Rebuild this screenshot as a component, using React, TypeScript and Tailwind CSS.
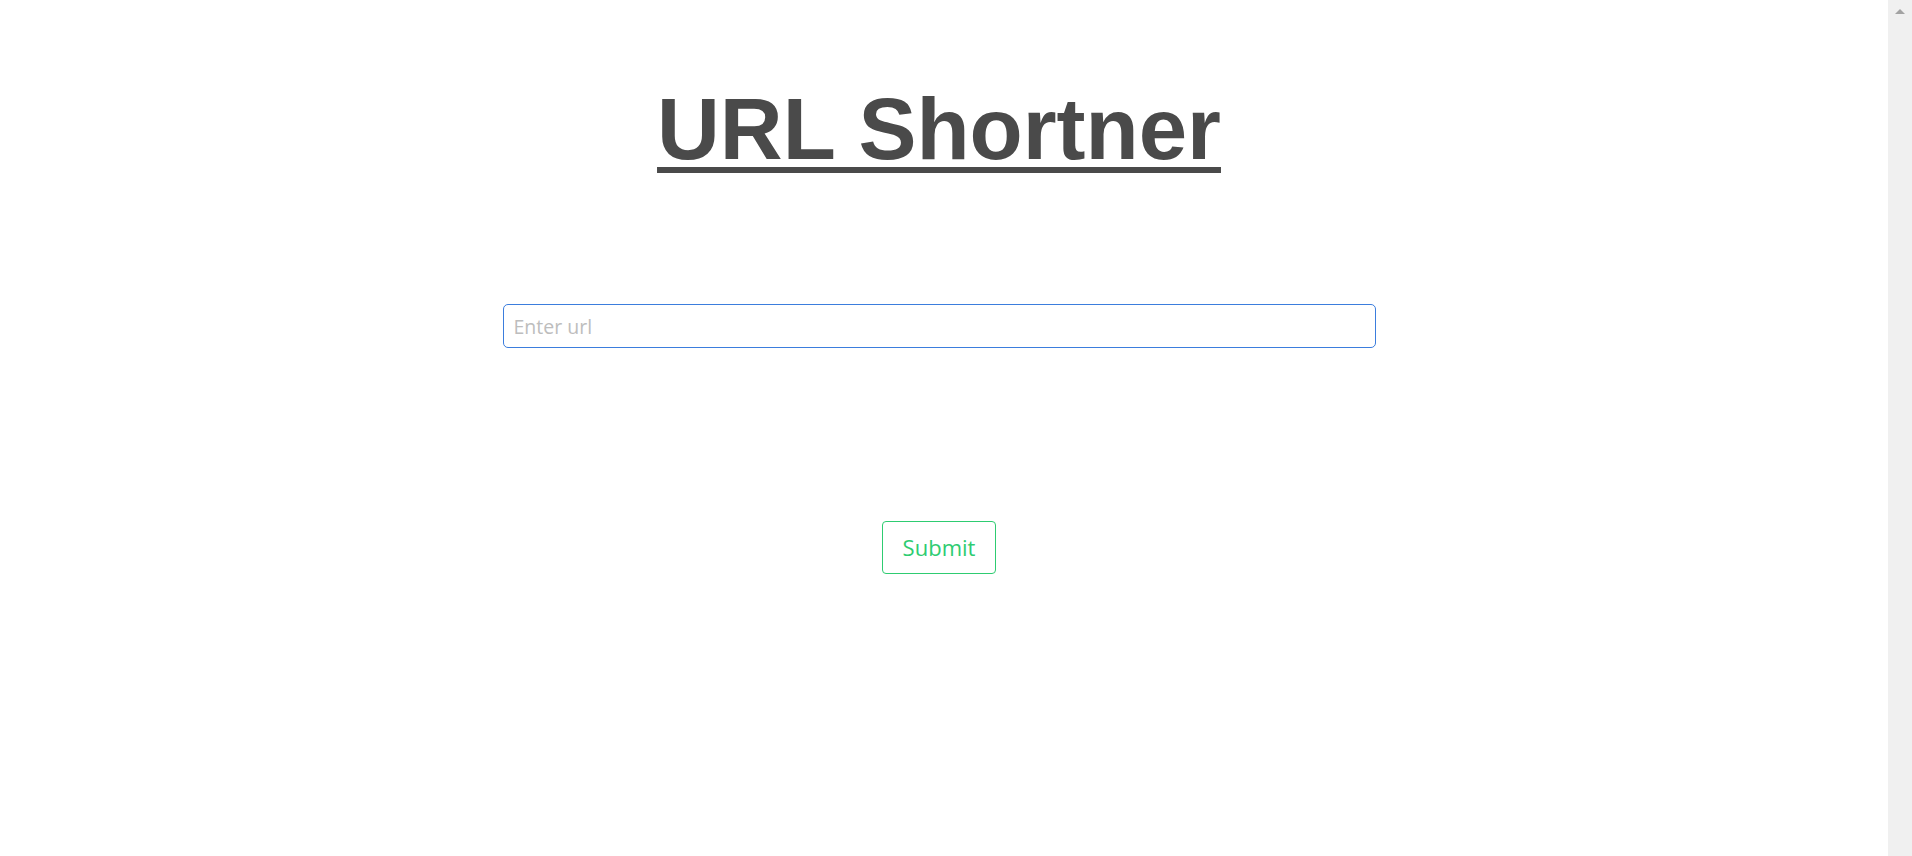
import { useState } from 'react';

export default function App() {
  const [url, setUrl] = useState('');

  return (
    <div className="flex h-[856px] w-full overflow-hidden bg-white">
      <main className="flex flex-1 flex-col items-center pr-[10px]">
        <h1 className="mt-[85px] font-['Liberation_Sans',Arial,sans-serif] text-[87px] leading-none font-bold text-[#4a4a4a] underline decoration-[6px] underline-offset-[8px]">
          URL Shortner
        </h1>
        <form
          onSubmit={(e) => e.preventDefault()}
          className="mt-[132px] flex w-[873px] flex-col items-center"
        >
          <input
            type="text"
            value={url}
            onChange={(e) => setUrl(e.target.value)}
            placeholder="Enter url"
            className="h-[44px] w-full rounded-[5px] border border-[#3b7ddd] px-[10px] font-['Open_Sans','Noto_Sans',sans-serif] text-[19.5px] text-[#333] outline-none placeholder:text-[#bdbdbd]"
          />
          <button
            type="submit"
            className="mt-[173px] h-[53px] w-[114px] rounded-[4px] border border-[#2ecc71] font-['Open_Sans','Noto_Sans',sans-serif] text-[22px] text-[#2ecc71]"
          >
            Submit
          </button>
        </form>
      </main>
      <div className="flex w-[24px] flex-col items-center bg-[#f0f0f0] pt-[9px]">
        <div className="h-0 w-0 border-x-[5px] border-b-[5px] border-x-transparent border-b-[#a3a3a3]" />
      </div>
    </div>
  );
}
